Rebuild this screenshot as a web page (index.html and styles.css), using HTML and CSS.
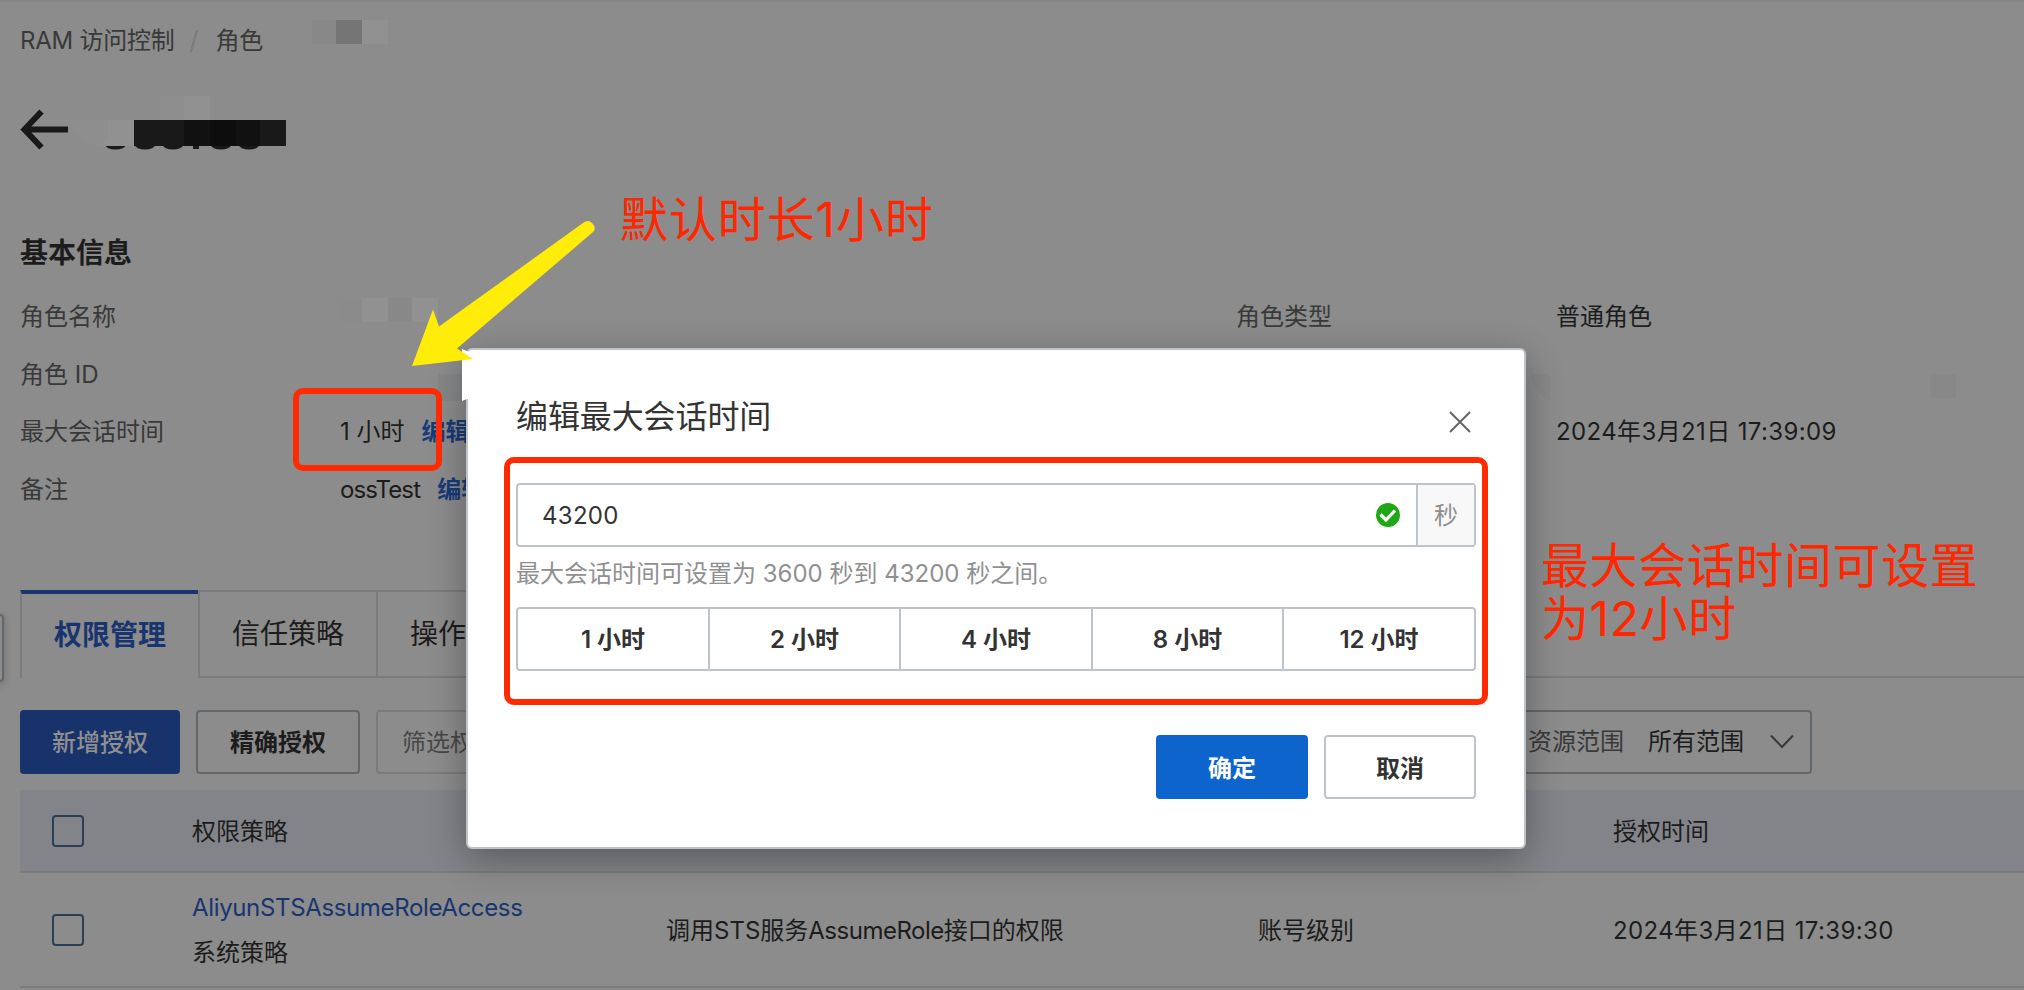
FILE: index.html
```html
<!DOCTYPE html>
<html lang="zh-CN">
<head>
<meta charset="utf-8">
<title>RAM 访问控制</title>
<link rel="stylesheet" href="styles.css">
</head>
<body>
<div class="page">
  <nav class="breadcrumb"><span>RAM 访问控制</span><i class="slash"></i><span>角色</span></nav>
  <div class="back">
    <svg width="50" height="42" viewBox="0 0 50 42"><path d="M21.500 2.500 4.500 20.500 21.500 38.500M4.500 20.500H48" fill="none" stroke="#191919" stroke-width="6"/></svg>
  </div>

  <h2 class="section-title">基本信息</h2>
  <div class="info">
    <span class="label">角色名称</span><span></span><span class="label">角色类型</span><span>普通角色</span>
    <span class="label">角色 ID</span><span></span><span></span><span></span>
    <span class="label">最大会话时间</span><span>1 小时<a class="edit">编辑</a></span><span></span><span class="date">2024年3月21日 17:39:09</span>
    <span class="label">备注</span><span><span class="latin">ossTest</span><a class="edit">编辑</a></span><span></span><span></span>
  </div>

  <div class="tabs">
    <div class="tab active">权限管理</div>
    <div class="tab">信任策略</div>
    <div class="tab last">操作记录</div>
    <div class="tab-rest"></div>
  </div>

  <div class="toolbar">
    <button class="btn dim-primary">新增授权</button>
    <button class="btn dim">精确授权</button>
    <div class="filter">筛选权限</div>
    <div class="scope"><span class="scope-label">资源范围</span><span>所有范围</span>
      <svg width="24" height="16" viewBox="0 0 24 16"><path d="M1 1.500 12 13 23 1.500" fill="none" stroke="#383838" stroke-width="2"/></svg>
    </div>
  </div>

  <div class="table">
    <div class="tr head"><i class="checkbox"></i><span>权限策略</span><span></span><span></span><span>授权时间</span></div>
    <div class="tr row"><i class="checkbox"></i>
      <div class="policy"><a>AliyunSTSAssumeRoleAccess</a><span>系统策略</span></div>
      <span>调用STS服务<span class="mixed">AssumeRole</span>接口的权限</span><span>账号级别</span><span class="date">2024年3月21日 17:39:30</span></div>
  </div>
  <div class="side-handle"></div>

  <svg class="layer" width="2024" height="990" viewBox="0 0 2024 990">
    <path fill="#888" d="M312 20h24v24h-24z"/><path fill="#757575" d="M336 20h26v24h-26z"/><path fill="#919191" d="M362 20h26v24h-26z"/>
    <path fill="#8e8e8e" d="M160 96h24v24h-24zM72 120h36v26h-4q-26 0-32-20z"/><path fill="#919191" d="M184 96h26v24h-26zM108 120h26v26h-26z"/>
    <g fill="#191919"><ellipse cx="115.500" cy="145" rx="10" ry="4.500"/><ellipse cx="145" cy="145" rx="10" ry="4.500"/><ellipse cx="173" cy="145" rx="10" ry="4.500"/><path d="M193 144h6v5h-6z"/><ellipse cx="221" cy="145" rx="10" ry="4.500"/><ellipse cx="249" cy="145" rx="10" ry="4.500"/></g>
    <path fill="#919191" d="M104 139h30v7h-30z"/>
    <path fill="#191919" d="M134 120h152v26H134z"/><path fill="#111" d="M184 120h76v26h-76z"/><path fill="#0d0d0d" d="M210 120h26v26h-26z"/>
    <path fill="#919191" d="M362 298h26v24h-26zM412 298h26v24h-26z"/><path fill="#888" d="M388 298h24v24h-24z"/><path fill="#8b8b8b" d="M338 298h24v24h-24z"/>
    <path fill="#888" d="M1530 374h20v27q-14-6-20-27zM1930 374h26v24h-26z"/>
    <path fill="#848687" d="M438 374h30v27h-30z"/>
  </svg>
</div>

<div class="dialog">
  <div class="dialog-head"><span>编辑最大会话时间</span>
    <svg width="22" height="22" viewBox="0 0 22 22"><path d="M1 1 21 21M21 1 1 21" stroke="#666" stroke-width="2"/></svg>
  </div>
  <div class="field"><span class="value">43200</span>
    <svg class="ok" width="24" height="24" viewBox="0 0 24 24"><circle cx="12" cy="12" r="12" fill="#1fa815"/><path d="M4.500 11.500 10 17 19 7.500" fill="none" stroke="#fff" stroke-width="3.200"/></svg>
    <span class="unit">秒</span></div>
  <div class="hint">最大会话时间可设置为 3600 秒到 43200 秒之间。</div>
  <div class="group"><span>1 小时</span><span>2 小时</span><span>4 小时</span><span>8 小时</span><span>12 小时</span></div>
  <div class="actions"><button class="btn ok-btn">确定</button><button class="btn cancel">取消</button></div>
</div>

<svg class="layer" width="2024" height="990" viewBox="0 0 2024 990">
  <path d="M462 349 474 354V398L467 399 462 401Z" fill="#fff"/>
  <path d="M412 366 433 309.500 439 326.500 583 223Q588 219 592 223 597 228 593 232L457 348.500 473 359Z" fill="#ffec08"/>
</svg>
<div class="mark mark-value"></div>
<div class="mark mark-form"></div>
<div class="note note-default">默认时长1小时</div>
<div class="note note-max">最大会话时间可设置<br>为12小时</div>
</body>
</html>
```

FILE: styles.css
```css
* { box-sizing: border-box; }
body {
  margin: 0;
  width: 2024px;
  height: 990px;
  overflow: hidden;
  position: relative;
  background: #8c8c8c;
  color: #1c1c1c;
  font: 24px/36px Inter, "Noto Sans CJK SC", sans-serif;
}
button { font-family: inherit; }
.page { height: 990px; padding: 0 0 0 20px; border-top: 2px solid #868686; overflow: hidden; }
.breadcrumb { display: flex; align-items: center; height: 36px; margin-top: 21px; color: #393939; letter-spacing: -.25px; }
.slash { width: 2px; height: 22px; margin: 0 20px 0 19px; background: #7a7a7a; transform: skewX(-16deg); }
.back { height: 42px; margin-top: 50px; }
.back svg { display: block; }
.section-title { margin: 82px 0 0; font-size: 28px; line-height: 40px; font-weight: 600; }
.info {
  display: grid;
  grid-template-columns: 320px 896px 320px 1fr;
  grid-auto-rows: 57.7px;
  align-items: center;
  margin-top: 15px;
}
.label { color: #393939; }
.latin { letter-spacing: -.85px; }
.mixed { letter-spacing: -.5px; }
.date { letter-spacing: .38px; }
.edit { margin-left: 17px; color: #183a78; font-weight: 600; }

.tabs { display: flex; height: 88px; margin-top: 71px; font-size: 28px; }
.tab {
  width: 178px;
  border: 2px solid #7b7b7b;
  border-right: 0;
  display: flex;
  align-items: center;
  justify-content: center;
  white-space: nowrap;
  padding-top: 1px;
}
.tab.active { border-top: 4px solid #18356f; border-bottom: 0; padding: 0 0 2px; color: #18356f; font-weight: 600; }
.tab-rest { flex: 1; border-bottom: 2px solid #7b7b7b; }

.toolbar { display: flex; margin-top: 32px; height: 64px; }
.btn { display: flex; align-items: center; justify-content: center; height: 64px; border-radius: 4px; font-size: 24px; font-weight: 500; padding: 0 0 2px; }
.dim-primary { width: 160px; background: #18326c; color: #8f8f8f; border: 0; }
.dim { width: 164px; margin: 0 16px; background: none; border: 2px solid #62676b; color: #1c1c1c; font-weight: 600; }
.filter { width: 300px; border: 2px solid #7b7b7b; border-radius: 4px; padding-left: 24px; line-height: 61px; color: #474747; }
.scope {
  display: flex;
  align-items: center;
  width: 400px;
  margin-left: 736px;
  padding: 1px 16px 0 0;
  justify-content: flex-end;
  border: 2px solid #62676b;
  border-radius: 4px;
}
.scope-label { color: #393939; margin-right: 24px; }
.scope svg { margin-left: 26px; }

.table { margin-top: 16px; }
.tr { display: grid; grid-template-columns: 140px 474px 592px 355px 1fr; align-items: center; padding: 2px 0 0 32px; border-bottom: 2px solid #7b7b7b; }
.tr > span { padding-top: 2px; }
.head { height: 83px; background: #838489; }
.row { height: 115px; }
.checkbox { width: 32px; height: 32px; border: 2px solid #2b3f52; border-radius: 4px; }
.policy { display: flex; flex-direction: column; gap: 9px; }
.policy a { color: #18356f; letter-spacing: -.35px; }
.side-handle { position: absolute; left: -10px; top: 614px; width: 14px; height: 68px; border: 2px solid #62676b; border-radius: 4px; box-shadow: 0 2px 8px rgba(0, 0, 0, .2); }

.layer { position: absolute; left: 0; top: 0; }

.dialog {
  position: absolute;
  left: 466px;
  top: 348px;
  width: 1060px;
  height: 501px;
  padding: 0 48px;
  background: #fff;
  border: 2px solid #bdc4ca;
  border-radius: 6px;
  color: #333;
  box-shadow: 0 10px 36px rgba(0, 0, 0, .32);
}
.dialog-head { display: flex; justify-content: space-between; height: 48px; margin-top: 43px; font-size: 32px; line-height: 48px; letter-spacing: -.1px; }
.dialog-head svg { margin: 18px 5px 0 0; }
.field { display: flex; align-items: center; height: 64px; margin-top: 42px; border: 2px solid #bdc4ca; border-radius: 4px; }
.value { flex: 1; padding: 2px 0 0 24px; letter-spacing: .3px; }
.ok { margin-right: 16px; }
.unit { width: 58px; height: 60px; line-height: 61px; text-align: center; background: #f8f8f8; border-left: 2px solid #bdc4ca; color: #8f8f8f; }
.hint { height: 60px; line-height: 54px; color: #909090; }
.group { display: grid; grid-template-columns: 190px 191px 192px 191px 1fr; height: 64px; border: 2px solid #bdc4ca; border-radius: 4px; font-weight: 600; line-height: 62px; text-align: center; }
.group span + span { border-left: 2px solid #bdc4ca; }
.actions { display: flex; justify-content: flex-end; gap: 16px; margin-top: 64px; }
.actions .btn { font-weight: 600; }
.ok-btn { width: 152px; border: 0; background: #0d64cc; color: #fff; }
.cancel { width: 152px; border: 2px solid #bdc4ca; background: #fff; color: #333; }

.mark { position: absolute; border: 6px solid #ff2a00; border-radius: 10px; }
.mark-value { left: 293px; top: 388px; width: 149px; height: 83px; }
.mark-form { left: 504px; top: 457px; width: 984px; height: 248px; }
.note { position: absolute; color: #ff2600; font-size: 48px; line-height: 53px; letter-spacing: .6px; white-space: nowrap; }
.note-default { left: 620px; top: 193px; letter-spacing: .9px; }
.note-max { left: 1541px; top: 539px; }
```
